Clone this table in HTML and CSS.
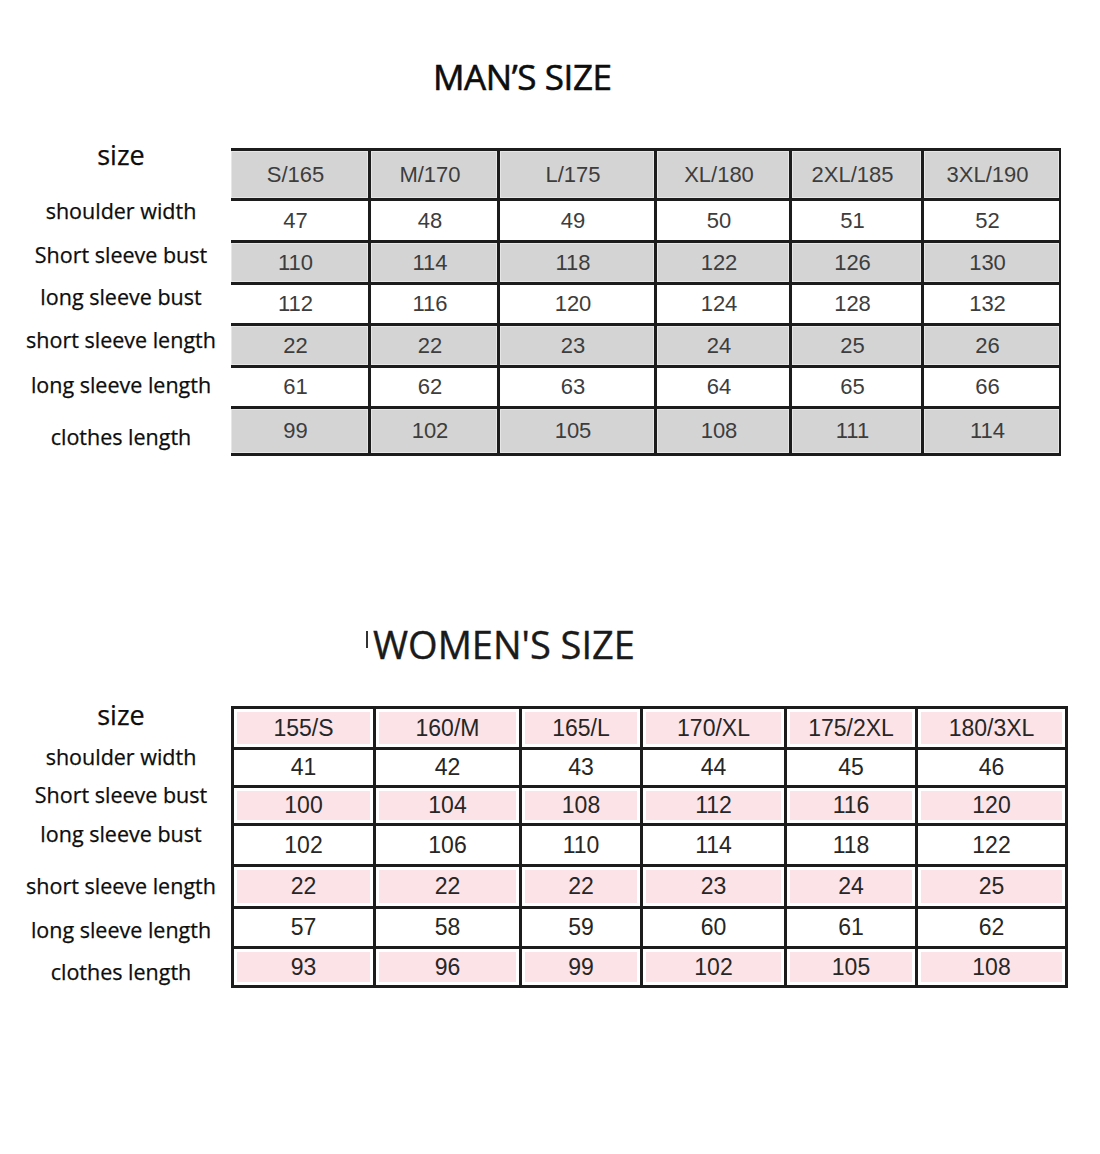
FILE: index.html
```html
<!DOCTYPE html>
<html lang="en">
<head>
<meta charset="utf-8">
<title>Size chart</title>
<link rel="stylesheet" href="styles.css">
</head>
<body>
<section class="chart men">
  <h2 class="title">MAN’S SIZE</h2>
  <div class="chart-body">
    <div class="labels">
      <div class="label size">size</div>
      <div class="label">shoulder width</div>
      <div class="label">Short sleeve bust</div>
      <div class="label">long sleeve bust</div>
      <div class="label">short sleeve length</div>
      <div class="label">long sleeve length</div>
      <div class="label">clothes length</div>
    </div>
    <div class="grid">
      <div class="c hl">S/165</div><div class="c hl">M/170</div><div class="c hl">L/175</div><div class="c hl">XL/180</div><div class="c hl">2XL/185</div><div class="c hl">3XL/190</div>
      <div class="c">47</div><div class="c">48</div><div class="c">49</div><div class="c">50</div><div class="c">51</div><div class="c">52</div>
      <div class="c hl">110</div><div class="c hl">114</div><div class="c hl">118</div><div class="c hl">122</div><div class="c hl">126</div><div class="c hl">130</div>
      <div class="c">112</div><div class="c">116</div><div class="c">120</div><div class="c">124</div><div class="c">128</div><div class="c">132</div>
      <div class="c hl">22</div><div class="c hl">22</div><div class="c hl">23</div><div class="c hl">24</div><div class="c hl">25</div><div class="c hl">26</div>
      <div class="c">61</div><div class="c">62</div><div class="c">63</div><div class="c">64</div><div class="c">65</div><div class="c">66</div>
      <div class="c hl">99</div><div class="c hl">102</div><div class="c hl">105</div><div class="c hl">108</div><div class="c hl">111</div><div class="c hl">114</div>
    </div>
  </div>
</section>

<section class="chart women">
  <h2 class="title"><span class="tick"></span>WOMEN'S SIZE</h2>
  <div class="chart-body">
    <div class="labels">
      <div class="label size">size</div>
      <div class="label">shoulder width</div>
      <div class="label">Short sleeve bust</div>
      <div class="label">long sleeve bust</div>
      <div class="label">short sleeve length</div>
      <div class="label">long sleeve length</div>
      <div class="label">clothes length</div>
    </div>
    <div class="grid">
      <div class="c hl">155/S</div><div class="c hl">160/M</div><div class="c hl">165/L</div><div class="c hl">170/XL</div><div class="c hl">175/2XL</div><div class="c hl">180/3XL</div>
      <div class="c">41</div><div class="c">42</div><div class="c">43</div><div class="c">44</div><div class="c">45</div><div class="c">46</div>
      <div class="c hl">100</div><div class="c hl">104</div><div class="c hl">108</div><div class="c hl">112</div><div class="c hl">116</div><div class="c hl">120</div>
      <div class="c">102</div><div class="c">106</div><div class="c">110</div><div class="c">114</div><div class="c">118</div><div class="c">122</div>
      <div class="c hl">22</div><div class="c hl">22</div><div class="c hl">22</div><div class="c hl">23</div><div class="c hl">24</div><div class="c hl">25</div>
      <div class="c">57</div><div class="c">58</div><div class="c">59</div><div class="c">60</div><div class="c">61</div><div class="c">62</div>
      <div class="c hl">93</div><div class="c hl">96</div><div class="c hl">99</div><div class="c hl">102</div><div class="c hl">105</div><div class="c hl">108</div>
    </div>
  </div>
</section>
</body>
</html>
```

FILE: styles.css
```css
html, body {
  margin: 0;
  padding: 0;
  background: #ffffff;
}

body {
  width: 1100px;
  height: 1154px;
  overflow: hidden;
  font-family: "Open Sans", "Liberation Sans", sans-serif;
  color: #111111;
}

.title {
  margin: 0;
  font-weight: 400;
  color: #0d0d0d;
  white-space: nowrap;
  -webkit-text-stroke: 0.6px #0d0d0d;
}

.men {
  padding-top: 57px;
}

.men .title {
  font-size: 35px;
  line-height: 40px;
  padding-left: 433px;
  letter-spacing: -0.4px;
}

.women {
  margin-top: 166px;
}

.women .title {
  font-size: 38px;
  line-height: 44px;
  padding-left: 366px;
  display: flex;
  align-items: center;
  color: #1a1a1a;
  -webkit-text-stroke: 0.4px #1a1a1a;
}

.tick {
  display: inline-block;
  width: 2px;
  height: 17px;
  background: #333333;
  margin-right: 5px;
  margin-top: -10px;
}

.chart-body {
  display: flex;
  align-items: flex-start;
}

.men .chart-body {
  margin-top: 38px;
}

.women .chart-body {
  margin-top: 29px;
}

.labels {
  width: 231px;
  padding-left: 11px;
  box-sizing: border-box;
  display: flex;
  flex-direction: column;
  align-items: center;
  flex: none;
}

.label {
  font-size: 21.5px;
  line-height: 30px;
  white-space: nowrap;
  color: #0d0d0d;
  -webkit-text-stroke: 0.25px #0d0d0d;
}

.label.size {
  font-size: 27px;
  line-height: 40px;
}

/* men's label spacing */
.men .label:nth-child(2) { margin-top: 21px; }
.men .label:nth-child(3) { margin-top: 14px; }
.men .label:nth-child(4) { margin-top: 12px; }
.men .label:nth-child(5) { margin-top: 13px; }
.men .label:nth-child(6) { margin-top: 15px; }
.men .label:nth-child(7) { margin-top: 22px; }

/* women's label spacing */
.women .label:nth-child(2) { margin-top: 7px; }
.women .label:nth-child(3) { margin-top: 8px; }
.women .label:nth-child(4) { margin-top: 9px; }
.women .label:nth-child(5) { margin-top: 22px; }
.women .label:nth-child(6) { margin-top: 14px; }
.women .label:nth-child(7) { margin-top: 12px; }

.grid {
  display: grid;
  gap: 3px;
  background: #1c1c1c;
  flex: none;
  font-family: "Liberation Sans", Arial, sans-serif;
}

.c {
  background: #ffffff;
  display: flex;
  align-items: center;
  justify-content: center;
}

.men .grid {
  margin-top: 13px;
  padding: 3px 2px 3px 0;
  grid-template-columns: 137px 126px 154px 132px 129px 135px;
  grid-template-rows: 47px 39px 39px 38px 39px 38px 44px;
}

.men .c {
  font-size: 22px;
  color: #3d3d3d;
  padding-right: 8px;
}

.men .c.hl {
  background: #d4d4d4;
  box-shadow: inset 0 0 0 1px #e6e6e6;
}

.women .grid {
  margin-top: 11px;
  padding: 3px;
  grid-template-columns: 139px 143px 118px 141px 128px 147px;
  grid-template-rows: 38px 35px 35px 38px 39px 37px 36px;
}

.women .c {
  font-size: 23px;
  color: #262626;
}

.women .c.hl {
  background: #fbe3e7;
  box-shadow: inset 0 0 0 3px #ffffff;
}
```
